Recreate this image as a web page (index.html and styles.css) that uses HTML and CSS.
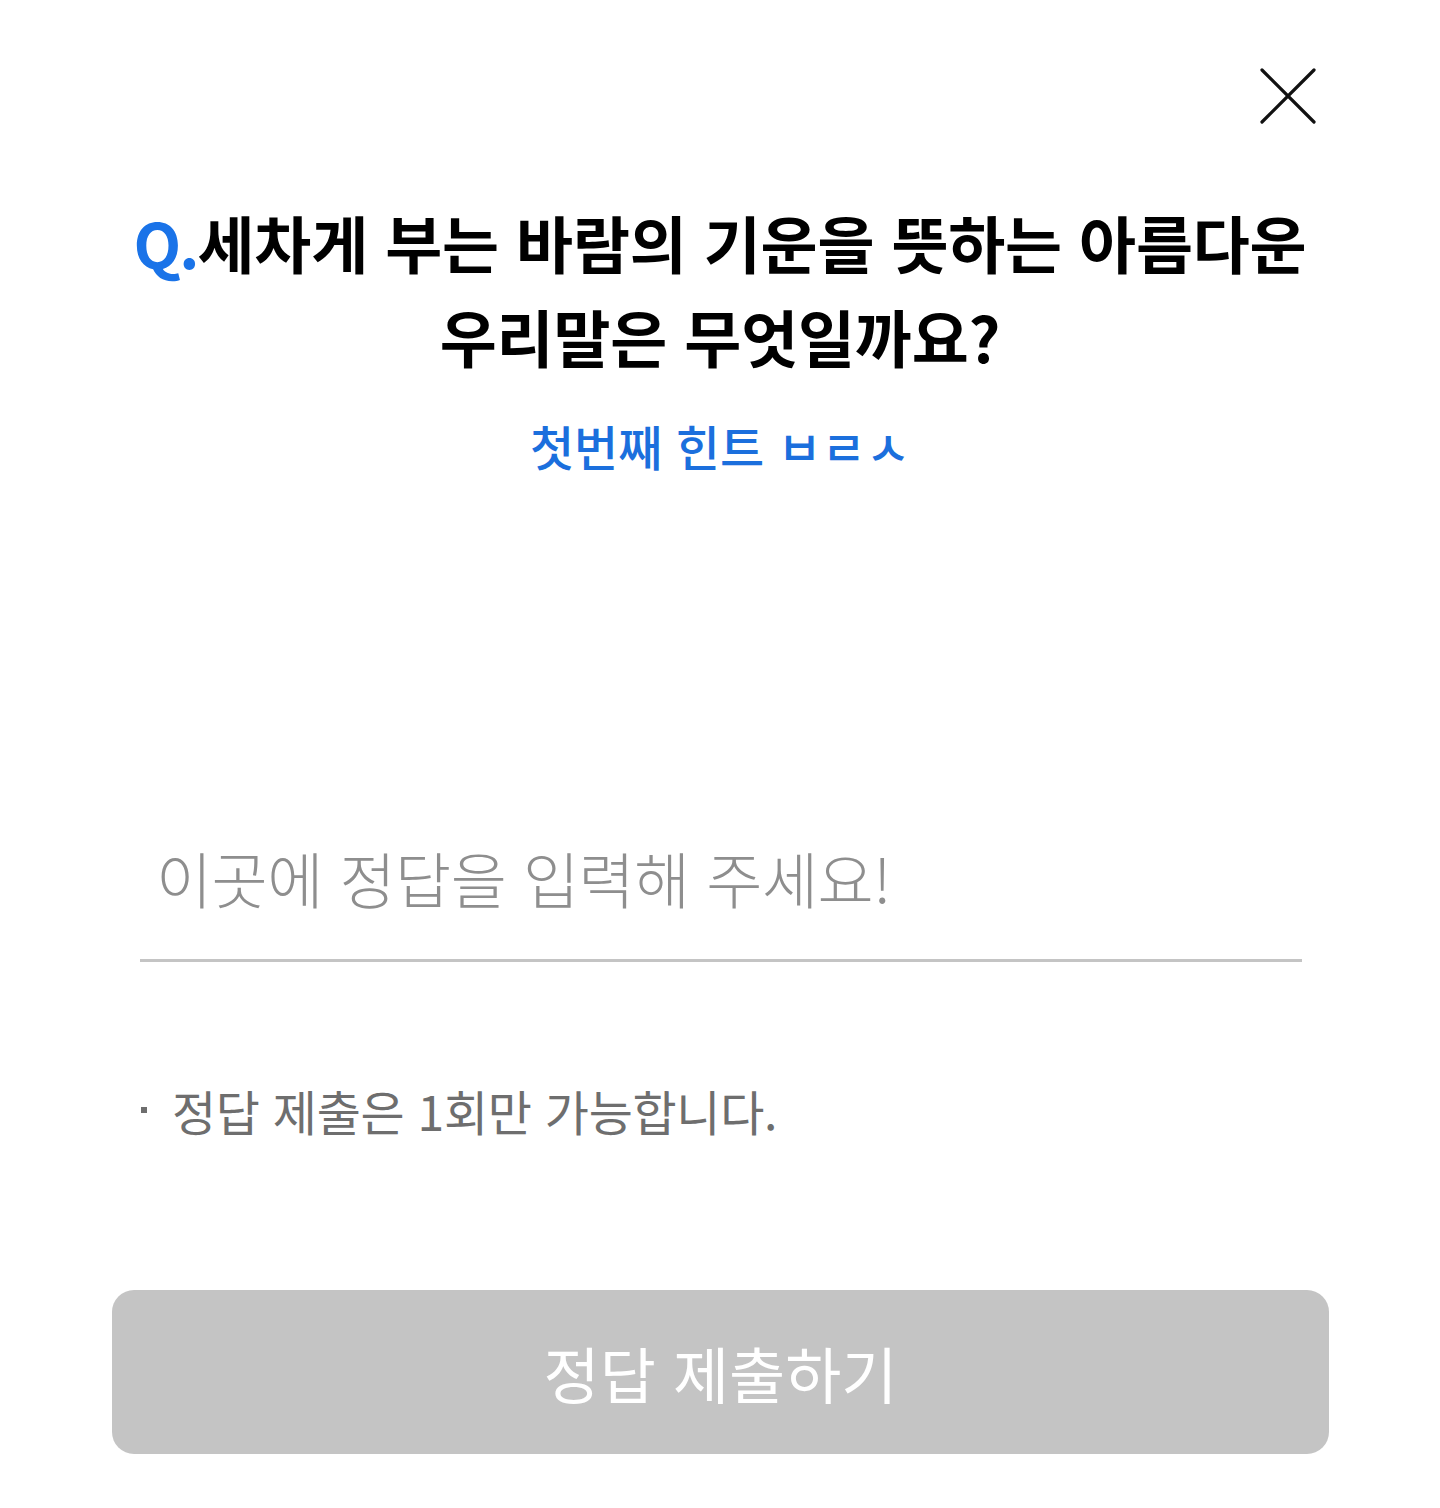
FILE: index.html
```html
<!DOCTYPE html>
<html lang="ko">
	<head>
		<meta charset="UTF-8">
		<meta name="viewport" content="width=device-width, initial-scale=1.0">
		<title>오늘의 퀴즈</title>
		<link rel="stylesheet" href="styles.css">
	</head>
	<body>
	<div class="popup">
		<div class="popup-top">
			<button class="btn-close" type="button" aria-label="닫기">
				<svg width="56" height="56" viewBox="0 0 56 56" fill="none" stroke="#111" stroke-width="3.2" stroke-linecap="round">
					<path d="M2 2L54 54M54 2L2 54" />
				</svg>
			</button>
		</div>

		<h2 class="quiz-title"><span class="q-mark">Q.</span>세차게 부는 바람의 기운을 뜻하는 아름다운<br />우리말은 무엇일까요?</h2>
		<p class="quiz-hint">첫번째 힌트 ㅂㄹㅅ</p>

		<form class="answer-form">
			<input class="answer-input" type="text" placeholder="이곳에 정답을 입력해 주세요!" />
			<p class="answer-note">정답 제출은 1회만 가능합니다.</p>
			<button class="btn-submit" type="button" disabled>정답 제출하기</button>
		</form>
	</div>
	</body>
</html>
```

FILE: styles.css
```css
body {
	margin: 0;
	background: #fff;
	font-family: 'Noto Sans CJK KR', 'Noto Sans', sans-serif;
}
.popup {
	display: flex;
	flex-direction: column;
	padding: 68px 0 0;
}
.popup-top {
	display: flex;
	justify-content: flex-end;
	padding-right: 124px;
}
.btn-close {
	background: none;
	border: 0;
	padding: 0;
	width: 56px;
	height: 56px;
	cursor: pointer;
}
.btn-close svg {
	display: block;
}
.quiz-title {
	margin: 71px 0 0;
	font-size: 62px;
	font-weight: 700;
	line-height: 94px;
	color: #000;
	text-align: center;
	letter-spacing: -0.2px;
}
.q-mark {
	color: #1a73e8;
	letter-spacing: -2px;
}
.quiz-hint {
	margin: 31px 0 0;
	font-size: 48px;
	font-weight: 500;
	line-height: 62px;
	color: #1b6fdd;
	text-align: center;
}
.answer-form {
	display: flex;
	flex-direction: column;
	padding: 0 138px 0 140px;
	margin-top: 362px;
}
.answer-input {
	font-family: 'Noto Sans CJK KR', 'Noto Sans', sans-serif;
	font-size: 61px;
	font-weight: 300;
	line-height: 80px;
	height: 80px;
	padding: 0 0 41px 16px;
	margin: 0;
	border: 0;
	border-bottom: 3px solid #c4c4c4;
	outline: none;
	color: #333;
	box-sizing: content-box;
	letter-spacing: -0.5px;
}
.answer-input::placeholder {
	color: #8e8e8e;
}
.answer-note {
	display: flex;
	align-items: center;
	margin: 118px 0 0;
	font-size: 48px;
	line-height: 60px;
	color: #6e6e6e;
	letter-spacing: -0.3px;
}
.answer-note::before {
	content: "";
	width: 6px;
	height: 6px;
	margin: 0 25px 0 1px;
	background: #6e6e6e;
}
.btn-submit {
	margin: 150px -27px 0 -28px;
	height: 164px;
	border: 0;
	border-radius: 22px;
	background: #c4c4c4;
	color: #fff;
	font-family: 'Noto Sans CJK KR', 'Noto Sans', sans-serif;
	font-size: 61px;
	font-weight: 400;
}
```
